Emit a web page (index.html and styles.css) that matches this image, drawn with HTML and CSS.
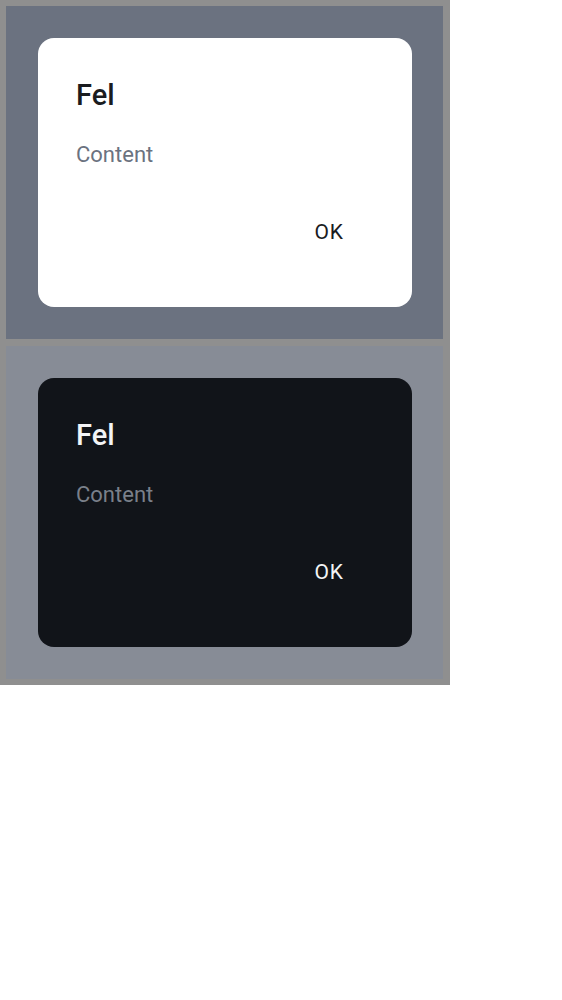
FILE: index.html
```html
<!DOCTYPE html>
<html>
<head>
<meta charset="utf-8">
<link rel="stylesheet" href="styles.css">
</head>
<body>
<div class="frame">
  <div class="panel panel-light">
    <div class="dialog dialog-light">
      <div class="title">Fel</div>
      <div class="content">Content</div>
      <div class="actions"><button class="btn">OK</button></div>
    </div>
  </div>
  <div class="panel panel-dark">
    <div class="dialog dialog-dark">
      <div class="title">Fel</div>
      <div class="content">Content</div>
      <div class="actions"><button class="btn">OK</button></div>
    </div>
  </div>
</div>
</body>
</html>
```
FILE: styles.css
```css
html, body {
  margin: 0;
  padding: 0;
  background: #ffffff;
  font-family: Roboto, "Liberation Sans", sans-serif;
}
.frame {
  width: 450px;
  box-sizing: border-box;
  background: #8f8f8f;
  padding: 6px 7px 6px 6px;
  display: flex;
  flex-direction: column;
  gap: 7px;
}
.panel {
  padding: 32px 31px 32px 32px;
}
.panel-light { background: #6b7280; }
.panel-dark { background: #878c96; }
.dialog {
  border-radius: 16px;
  height: 269px;
  box-sizing: border-box;
  padding: 39px 38px 0 38px;
  display: flex;
  flex-direction: column;
}
.dialog-light { background: #ffffff; color: #1a1c1f; }
.dialog-dark { background: #111419; color: #f3f4f6; }
.title {
  font-size: 29px;
  line-height: 36px;
  font-weight: 500;
}
.content {
  margin-top: 28px;
  font-size: 22px;
  line-height: 28px;
}
.dialog-light .content { color: #6b7280; }
.dialog-dark .content { color: #7a808a; }
.actions {
  margin-top: 43px;
  display: flex;
  justify-content: flex-end;
}
.btn {
  background: none;
  border: none;
  font-family: inherit;
  font-size: 21px;
  line-height: 24px;
  font-weight: 400;
  letter-spacing: 1px;
  color: inherit;
  padding: 8px 30px 8px 16px;
}
```
